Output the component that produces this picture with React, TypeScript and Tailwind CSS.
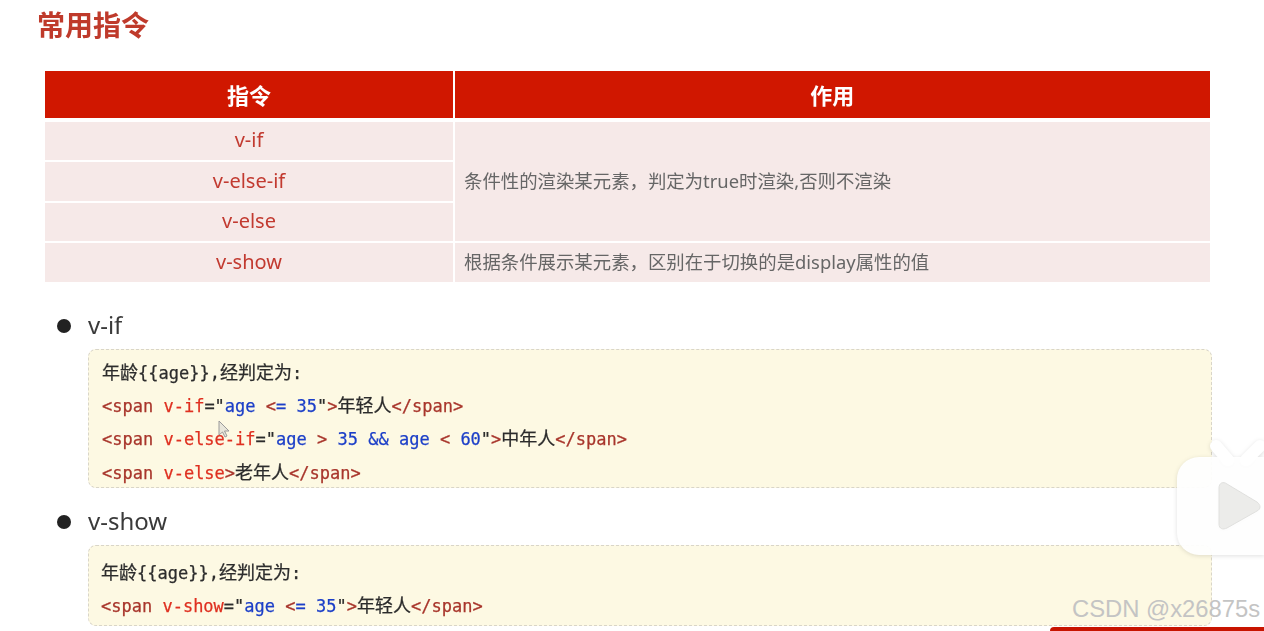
import React from 'react';

const sans = "font-['Noto_Sans','Noto_Sans_CJK_SC',sans-serif]";

const Tag = ({ children }: { children: React.ReactNode }) => <span className="text-[#a8352b]">{children}</span>;
const Attr = ({ children }: { children: React.ReactNode }) => <span className="text-[#df3020]">{children}</span>;
const Val = ({ children }: { children: React.ReactNode }) => <span className="text-[#1c3fc8]">{children}</span>;
const Cn = ({ children }: { children: React.ReactNode }) => (
  <span className="text-[18px] tracking-normal font-normal text-[#2c2c2c] font-['Noto_Sans_CJK_SC',sans-serif]">{children}</span>
);

const CodeLine = ({ children }: { children: React.ReactNode }) => (
  <div className="h-[33.2px] leading-[33.2px] whitespace-pre">{children}</div>
);

const Heading = ({ children }: { children: React.ReactNode }) => (
  <div className="flex items-center h-[30px] pl-[57px] gap-[17px]">
    <span className="w-[14px] h-[14px] rounded-full bg-[#222]" />
    <span className="text-[24px] leading-[30px] mb-[3px] text-[#3a3a3a]">{children}</span>
  </div>
);

const CodeBox = ({ children, className }: { children: React.ReactNode; className: string }) => (
  <div
    className={`ml-[88px] w-[1124px] border border-dashed border-[#d9d5c8] rounded-lg bg-[#fdf9e3] font-['DejaVu_Sans_Mono',monospace] text-[17px] [-webkit-text-stroke:0.25px] text-[#2c2c2c] ${className}`}
  >
    {children}
  </div>
);

const headCell = 'h-[47px] pt-[2px] bg-[#d01700] text-white font-bold text-[22px] flex items-center justify-center';
const nameCell = 'col-start-1 bg-[#f6e9e8] text-[#c23a30] text-[20px] pb-[2px] flex items-center justify-center';
const descCell = 'bg-[#f6e9e8] text-[#666] text-[18.4px] pb-[2px] flex items-center pl-[9.500px]';

export default function App() {
  return (
    <div className={`relative h-[631px] overflow-hidden bg-white ${sans}`}>
      <div className="blur-[0.4px]">
        <h1 className="pl-[37px] pt-[7px] h-[71px] text-[28px] leading-[36px] font-bold text-[#bf3a2b]">常用指令</h1>

        <div className="mx-[45px] w-[1165px] grid grid-cols-[408px_755.500px] gap-x-[1.500px]">
          <div className={headCell}>指令</div>
          <div className={headCell}>作用</div>

          <div className={`mt-[4px] h-[38px] ${nameCell}`}>v-if</div>
          <div className={`mt-[4px] row-span-3 ${descCell}`}>
            条件性的渲染某元素，判定为true时渲染,否则不渲染
          </div>
          <div className={`mt-[2px] h-[39px] ${nameCell}`}>v-else-if</div>
          <div className={`mt-[2px] h-[38px] ${nameCell}`}>v-else</div>
          <div className={`mt-[2px] h-[39px] ${nameCell}`}>v-show</div>
          <div className={`mt-[2px] h-[39px] ${descCell}`}>
            根据条件展示某元素，区别在于切换的是display属性的值
          </div>
        </div>

        <div className="mt-[29px]">
          <Heading>v-if</Heading>
        </div>
        <CodeBox className="mt-[8px] h-[139px] pt-[5px] px-[13px]">
          <CodeLine><Cn>年龄</Cn>{'{{age}},'}<Cn>经判定为</Cn>:</CodeLine>
          <CodeLine><Tag>{'<span '}</Tag><Attr>v-if</Attr>="<Val>age</Val> <Tag>{'<'}</Tag><Val>= 35</Val>"<Tag>{'>'}</Tag><Cn>年轻人</Cn><Tag>{'</span>'}</Tag></CodeLine>
          <CodeLine><Tag>{'<span '}</Tag><Attr>v-else-if</Attr>="<Val>age</Val> <Tag>{'>'}</Tag> <Val>35 && age</Val> <Tag>{'<'}</Tag> <Val>60</Val>"<Tag>{'>'}</Tag><Cn>中年人</Cn><Tag>{'</span>'}</Tag></CodeLine>
          <CodeLine><Tag>{'<span '}</Tag><Attr>v-else</Attr><Tag>{'>'}</Tag><Cn>老年人</Cn><Tag>{'</span>'}</Tag></CodeLine>
        </CodeBox>

        <div className="mt-[19px]">
          <Heading>v-show</Heading>
        </div>
        <CodeBox className="mt-[8px] h-[81px] pt-[9px] px-[12px]">
          <CodeLine><Cn>年龄</Cn>{'{{age}},'}<Cn>经判定为</Cn>:</CodeLine>
          <CodeLine><Tag>{'<span '}</Tag><Attr>v-show</Attr>="<Val>age</Val> <Tag>{'<'}</Tag><Val>= 35</Val>"<Tag>{'>'}</Tag><Cn>年轻人</Cn><Tag>{'</span>'}</Tag></CodeLine>
        </CodeBox>
      </div>

      {/* mouse cursor captured in the video */}
      <svg className="absolute left-[217px] top-[420px]" width="14" height="20" viewBox="0 0 14 20">
        <path d="M2 1v14l3.500-3 2.500 5 2-1-2.500-5H12z" fill="#e8e6da" stroke="#9a9a9a" strokeWidth="1" />
      </svg>

      {/* floating player logo */}
      <svg className="absolute left-[1170px] top-[432px] drop-shadow-[0_1px_2px_rgba(0,0,0,0.13)]" width="94" height="130" viewBox="0 0 94 130">
        <path d="M46 14 L58 28" stroke="#fff" strokeWidth="12" strokeLinecap="round" />
        <path d="M90 14 L76 28" stroke="#fff" strokeWidth="12" strokeLinecap="round" />
        <rect x="7" y="25" width="120" height="98" rx="22" fill="#fff" fillOpacity="0.94" />
        <path
          d="M49 56 C49 51 53 49 57 52 L87 70 C91 73 91 77 87 79 L57 96 C53 98 49 97 49 92 Z"
          fill="#ececea"
          stroke="#e0e0de"
          strokeWidth="1"
        />
      </svg>

      {/* watermark */}
      <div className="absolute left-[1072px] top-[596px] font-['Liberation_Sans',sans-serif] text-[23.8px] leading-[26px] text-[#c4c4c4]">
        CSDN @x26875s
      </div>

      <div className="absolute left-[1050px] top-[627px] w-[214px] h-[4px] rounded-tl-md bg-[#c81400]" />
    </div>
  );
}
